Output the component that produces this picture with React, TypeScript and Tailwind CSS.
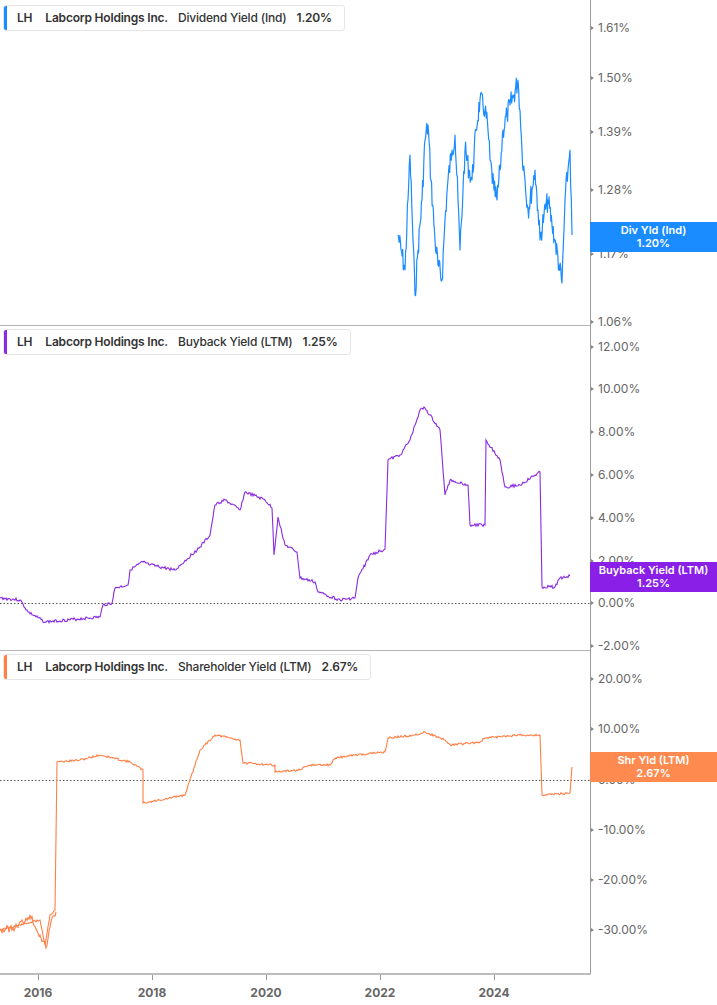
import React from "react";

type P = [number, number][];
function noisy(pts: P, amp: number, seed: number, step = 1.5): string {
  let s = seed;
  const rnd = () => { s = (s * 9301 + 49297) % 233280; return s / 233280 - 0.5; };
  const out: string[] = [];
  for (let i = 0; i < pts.length - 1; i++) {
    const [x0, y0] = pts[i]; const [x1, y1] = pts[i + 1];
    const n = Math.max(1, Math.round((x1 - x0) / step));
    for (let k = 0; k < n; k++) {
      const t = k / n;
      const y = y0 + (y1 - y0) * t + (k === 0 ? 0 : rnd() * amp);
      out.push(`${(x0 + (x1 - x0) * t).toFixed(1)},${y.toFixed(1)}`);
    }
  }
  const l = pts[pts.length - 1];
  out.push(`${l[0]},${l[1]}`);
  return out.join(" ");
}

const div: P = [[398,235],[401,250],[405,270],[408,200],[410,155],[413,240],[415,295],[418,250],[422,200],[425,140],[428,125],[431,180],[435,240],[438,265],[442,280],[445,220],[448,180],[452,150],[455,135],[458,200],[460,250],[463,190],[465,150],[469,170],[472,180],[476,130],[480,100],[485,110],[488,130],[490,160],[494,190],[497,200],[500,170],[503,130],[507,115],[510,105],[514,95],[518,80],[520,110],[522,150],[525,180],[528,210],[532,190],[535,170],[538,210],[540,240],[544,215],[548,200],[552,225],[555,240],[559,265],[562,283],[564,230],[565,200],[568,170],[570,150],[572,235]];
const bb: P = [[0,598],[20,600],[28,612],[45,622],[100,617],[103,605],[112,603],[115,588],[128,585],[130,570],[143,562],[150,565],[175,570],[200,547],[210,535],[215,505],[225,500],[240,510],[245,492],[265,500],[272,508],[274,555],[278,517],[285,545],[297,552],[300,578],[315,582],[318,592],[340,600],[355,598],[358,578],[370,555],[385,549],[388,460],[400,455],[410,440],[420,410],[425,408],[440,430],[445,495],[450,480],[468,485],[470,525],[485,525],[486,440],[500,460],[505,487],[520,485],[540,472],[542,587],[555,587],[560,578],[570,576]];
const sh: P = [[0,930],[20,925],[40,920],[45,945],[50,915],[55,910],[57,762],[80,760],[100,755],[130,762],[143,770],[143,803],[160,800],[185,795],[200,750],[215,735],[240,740],[243,763],[275,765],[275,772],[300,770],[310,765],[330,765],[335,758],[355,755],[385,752],[388,738],[415,735],[425,732],[445,740],[450,745],[480,742],[485,738],[520,735],[540,735],[542,795],[570,793],[572,767]];

const Header = ({ color, metric, val }: { color: string; metric: string; val: string }) => (
  <div className="h-[26px] flex items-center gap-[10px] bg-white border border-[#e6e6e6] rounded-[3px] overflow-hidden text-[12px] font-semibold text-[#333] pr-[12px] tracking-[-0.2px]">
    <div className="w-[3px] self-stretch" style={{ background: color }} />
    <span>LH</span>
    <span className="ml-[3px]">Labcorp Holdings Inc.</span>
    <span className="font-medium">{metric}</span>
    <span>{val}</span>
  </div>
);

const Tag = ({ color, a, b }: { color: string; a: string; b: string }) => (
  <div className="w-[127px] h-[30px] flex flex-col items-center justify-center text-white text-[11px] font-semibold leading-[13px]" style={{ background: color }}>
    <span>{a}</span><span>{b}</span>
  </div>
);

const ticks: [number, string][] = [
  [28,"1.61%"],[78,"1.50%"],[132,"1.39%"],[190,"1.28%"],[254,"1.17%"],[322,"1.06%"],
  [347,"12.00%"],[389,"10.00%"],[432,"8.00%"],[475,"6.00%"],[518,"4.00%"],[561,"2.00%"],[603,"0.00%"],[646,"-2.00%"],
  [679,"20.00%"],[729,"10.00%"],[780,"0.00%"],[830,"-10.00%"],[880,"-20.00%"],[930,"-30.00%"],
];
const years: [number, string][] = [[38,"2016"],[152,"2018"],[266,"2020"],[380,"2022"],[494,"2024"]];

export default function App() {
  return (
    <div className="relative w-[717px] h-[1005px] bg-white overflow-hidden" style={{ fontFamily: "Inter, 'Liberation Sans', sans-serif" }}>
      <svg className="absolute left-0 top-0" width="717" height="1005">
        <line x1="0" y1="325.5" x2="590" y2="325.5" stroke="#b5b5b5" />
        <line x1="0" y1="650.5" x2="590" y2="650.5" stroke="#b5b5b5" />
        <line x1="590.5" y1="0" x2="590.5" y2="975" stroke="#9a9a9a" />
        <line x1="0" y1="974" x2="591" y2="974" stroke="#bdbdbd" strokeWidth="2" />
        <line x1="0" y1="603.5" x2="590" y2="603.5" stroke="#555" strokeDasharray="1.5 2" />
        <line x1="0" y1="780.5" x2="590" y2="780.5" stroke="#555" strokeDasharray="1.5 2" />
        {ticks.map(([y], i) => <path key={i} d={`M591 ${y - 2} L594 ${y} L591 ${y + 2}Z`} fill="#888" />)}
        {years.map(([x], i) => <line key={i} x1={x + 0.5} y1="975" x2={x + 0.5} y2="980" stroke="#999" />)}
        <polyline points={noisy(div, 22, 7, 0.6)} fill="none" stroke="#1a8cff" strokeWidth="1.2" strokeLinejoin="round" />
        <polyline points={noisy(bb, 3, 3, 1)} fill="none" stroke="#8a2be2" strokeWidth="1.1" />
        <polyline points={noisy(sh, 2, 11, 1)} fill="none" stroke="#ff7f45" strokeWidth="1.1" />
        <polyline points={noisy([[0,930],[15,928],[30,915],[40,935],[46,948],[52,918],[56,912]], 7, 5, 1)} fill="none" stroke="#ff7f45" strokeWidth="1.1" />
      </svg>
      {ticks.map(([y, t], i) => (
        <div key={i} className="absolute left-[598px] text-[12px] text-[#666] leading-none" style={{ top: y - 6 }}>{t}</div>
      ))}
      <div className="absolute left-0 top-[984px] w-[590px] flex pl-[13px] gap-[64px]">
        {years.map(([, t], i) => (
          <div key={i} className="w-[50px] text-center text-[12px] font-bold text-[#666]">{t}</div>
        ))}
      </div>
      <div className="absolute left-[3px] top-[5px]"><Header color="#1a8cff" metric="Dividend Yield (Ind)" val="1.20%" /></div>
      <div className="absolute left-[3px] top-[329px]"><Header color="#8a2be2" metric="Buyback Yield (LTM)" val="1.25%" /></div>
      <div className="absolute left-[3px] top-[654px]"><Header color="#ff7f45" metric="Shareholder Yield (LTM)" val="2.67%" /></div>
      <div className="absolute left-[590px] top-[222px]"><Tag color="#1a8cff" a="Div Yld (Ind)" b="1.20%" /></div>
      <div className="absolute left-[590px] top-[562px]"><Tag color="#8a1fe8" a="Buyback Yield (LTM)" b="1.25%" /></div>
      <div className="absolute left-[590px] top-[752px]"><Tag color="#ff8a50" a="Shr Yld (LTM)" b="2.67%" /></div>
    </div>
  );
}
